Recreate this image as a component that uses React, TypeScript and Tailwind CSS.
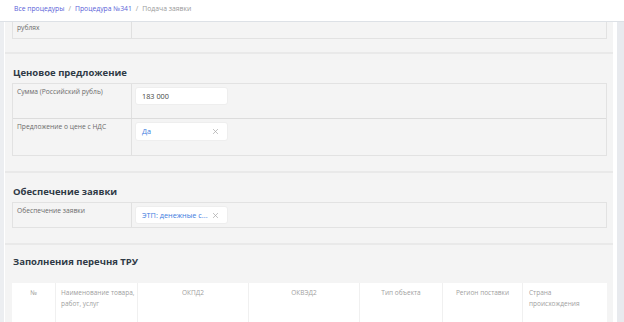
import React from "react";

const X = () => (
  <svg width="7" height="7" viewBox="0 0 10 10" className="shrink-0">
    <path d="M1.5 1.5 L8.5 8.5 M8.5 1.5 L1.5 8.5" stroke="#a8a8a8" strokeWidth="1" />
  </svg>
);

function Row({
  label,
  children,
  h,
  last,
  pt = "pt-[3px]",
}: {
  label: React.ReactNode;
  children?: React.ReactNode;
  h: string;
  last?: boolean;
  pt?: string;
}) {
  return (
    <div className={`flex ${h} ${last ? "" : "border-b border-[#dcdcdc]"}`}>
      <div className={`w-[119px] shrink-0 border-r border-[#e0e0e0] pl-[4px] ${pt} text-[6.7px] leading-[10px] text-[#6a6a6a]`}>
        {label}
      </div>
      <div className="flex-1 pl-[3px] pt-[3px]">{children}</div>
    </div>
  );
}

function Section({
  title,
  children,
  pt = "pt-[12px]",
  pb = "pb-[15px]",
}: {
  title: string;
  children: React.ReactNode;
  pt?: string;
  pb?: string;
}) {
  return (
    <div className={`border-b-2 border-[#e9e9e9] pl-[7px] pr-[6px] ${pt} ${pb}`}>
      <div className="text-[9.5px] leading-[14px] font-bold text-[#2f3a46] pl-[1px] mb-[3px]">{title}</div>
      {children}
    </div>
  );
}

export default function App() {
  return (
    <div className="w-[624px] h-[322px] overflow-hidden flex flex-col bg-[#f4f4f4] font-['Open_Sans',sans-serif]">
      <div className="h-[22px] shrink-0 bg-white border-b border-[#dde1e6] flex items-center pl-[14px] pb-[3px] text-[6.8px] text-[#9a9a9a] gap-[4px]">
        <span className="text-[#5a5fd8]">Все процедуры</span>
        <span>/</span>
        <span className="text-[#5a5fd8]">Процедура №341</span>
        <span>/</span>
        <span>Подача заявки</span>
      </div>
      <div className="flex flex-1 min-h-0">
        <div className="w-[5px] bg-[#eceef1] border-r border-white shrink-0" />
        <div className="flex-1 min-w-0 overflow-hidden bg-[#f4f4f4]">
          {/* partial top section */}
          <div className="h-[32px] overflow-hidden flex flex-col justify-end border-b-2 border-[#e9e9e9] pl-[7px] pr-[6px] pb-[13px]">
            <div className="border-x border-b border-[#e2e2e2] shrink-0">
              <Row h="h-[30px]" pt="pt-[5px]" last label={<>Предложение о цене в<br />рублях</>}>
                <div className="text-[6.7px] leading-[10px] text-[#6a6a6a] pt-[2px]">—</div>
              </Row>
            </div>
          </div>

          <Section title="Ценовое предложение">
            <div className="border border-[#e2e2e2]">
              <Row h="h-[35px]" label="Сумма (Российский рубль)">
                <div className="w-[93px] h-[18px] bg-white rounded-[3px] border border-[#eeeeee] flex items-center pl-[6px] text-[7.3px] text-[#444]">
                  183 000
                </div>
              </Row>
              <Row h="h-[36px]" last label="Предложение о цене с НДС">
                <div className="w-[93px] h-[19px] bg-white rounded-[3px] border border-[#eeeeee] flex items-center justify-between pl-[6px] pr-[8px] text-[7.3px] text-[#3b7be0]">
                  <span>Да</span>
                  <X />
                </div>
              </Row>
            </div>
          </Section>

          <Section title="Обеспечение заявки">
            <div className="border border-[#e2e2e2]">
              <Row h="h-[24px]" last label="Обеспечение заявки">
                <div className="w-[93px] h-[18px] bg-white rounded-[3px] border border-[#eeeeee] flex items-center justify-between pl-[6px] pr-[8px] text-[7.3px] text-[#3b7be0]">
                  <span className="whitespace-nowrap">ЭТП: денежные с...</span>
                  <X />
                </div>
              </Row>
            </div>
          </Section>

          <div className="pl-[7px] pr-[6px] pt-[10px]">
            <div className="text-[9.5px] leading-[14px] font-bold text-[#2f3a46] pl-[1px] mb-[14px]">Заполнения перечня ТРУ</div>
            <div className="bg-white h-[60px] flex text-[6.5px] leading-[11px] text-[#a0a0a0]">
              <div className="w-[44px] border-r border-[#f0f0f0] text-center pt-[4px]">№</div>
              <div className="w-[82px] border-r border-[#f0f0f0] pl-[5px] pr-[2px] pt-[4px]">Наименование товара, работ, услуг</div>
              <div className="w-[111px] border-r border-[#f0f0f0] text-center pt-[4px]">ОКПД2</div>
              <div className="w-[111px] border-r border-[#f0f0f0] text-center pt-[4px]">ОКВЭД2</div>
              <div className="w-[83px] border-r border-[#f0f0f0] text-center pt-[4px]">Тип объекта</div>
              <div className="w-[80px] border-r border-[#f0f0f0] text-center pt-[4px]">Регион поставки</div>
              <div className="flex-1 pl-[6px] pt-[4px]">Страна<br />происхождения</div>
            </div>
          </div>
        </div>
        <div className="w-[4px] bg-white shrink-0" />
        <div className="w-[7px] bg-[#e8eaee] shrink-0" />
      </div>
    </div>
  );
}
